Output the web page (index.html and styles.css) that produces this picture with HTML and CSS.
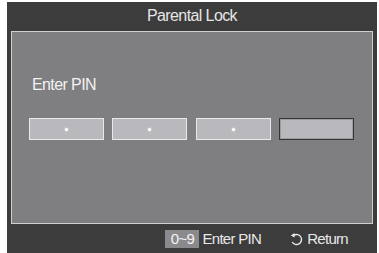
FILE: index.html
```html
<!DOCTYPE html>
<html>
<head>
<meta charset="utf-8">
<link rel="stylesheet" href="styles.css">
</head>
<body>
<div class="frame">
  <div class="title">Parental Lock</div>
  <div class="panel">
    <div class="label">Enter PIN</div>
    <div class="pins">
      <div class="pin filled"><span class="dot"></span></div>
      <div class="pin filled"><span class="dot"></span></div>
      <div class="pin filled"><span class="dot"></span></div>
      <div class="pin active"></div>
    </div>
  </div>
  <div class="footer">
    <span class="key">0~9</span>
    <span class="hint">Enter PIN</span>
    <svg class="ret" width="14" height="14" viewBox="0 0 14 14">
      <path d="M5 3.2 A5 5 0 1 1 3.2 10" fill="none" stroke="#e8e8e8" stroke-width="1.4"/>
      <polygon points="1.8,3.4 5.6,0.9 5.6,5.6" fill="#e8e8e8"/>
    </svg>
    <span class="hint ret-text">Return</span>
  </div>
</div>
</body>
</html>
```
FILE: styles.css
```css
html, body {
  margin: 0;
  padding: 0;
  background: #ffffff;
}
body {
  font-family: "Liberation Sans", Arial, sans-serif;
}
.frame {
  margin: 2px 0 0 7px;
  width: 370px;
  height: 251px;
  background: #3c3c3c;
  display: flex;
  flex-direction: column;
}
.title {
  height: 29px;
  box-sizing: border-box;
  padding-top: 5px;
  text-align: center;
  color: #e6e6e6;
  font-size: 16px;
  line-height: 18px;
  letter-spacing: -0.6px;
}
.panel {
  margin: 0 4px;
  height: 193px;
  box-sizing: border-box;
  border: 1px solid #d0d0d2;
  background: #7f7f82;
  padding: 44px 0 0 17px;
}
.label {
  margin-left: 3px;
  color: #f2f2f2;
  font-size: 16px;
  line-height: 18px;
  letter-spacing: -0.6px;
}
.pins {
  margin-top: 24px;
  display: flex;
  gap: 8.3px;
}
.pin {
  width: 75px;
  height: 22px;
  box-sizing: border-box;
  background: #b9b9bd;
  display: flex;
  align-items: center;
  justify-content: center;
}
.pin.filled {
  border: 1px solid #e8e8ea;
}
.pin.active {
  border: 1px solid #363638;
  box-shadow: inset 0 0 0 1px #9c9ca0;
}
.dot {
  width: 3px;
  height: 3px;
  border-radius: 50%;
  background: #ffffff;
  box-shadow: 0 0 2px #ffffff;
}
.footer {
  height: 29px;
  box-sizing: border-box;
  padding: 6px 29px 0 0;
  display: flex;
  justify-content: flex-end;
  align-items: flex-start;
  color: #e8e8e8;
  font-size: 15px;
  line-height: 18px;
  letter-spacing: -0.7px;
}
.key {
  background: #8a8a8c;
  color: #f4f4f4;
  width: 34px;
  height: 18px;
  text-align: center;
}
.hint {
  margin-left: 3px;
}
.ret {
  margin: 2px 0 0 28px;
}
.ret-text {
  margin-left: 4px;
}
```
